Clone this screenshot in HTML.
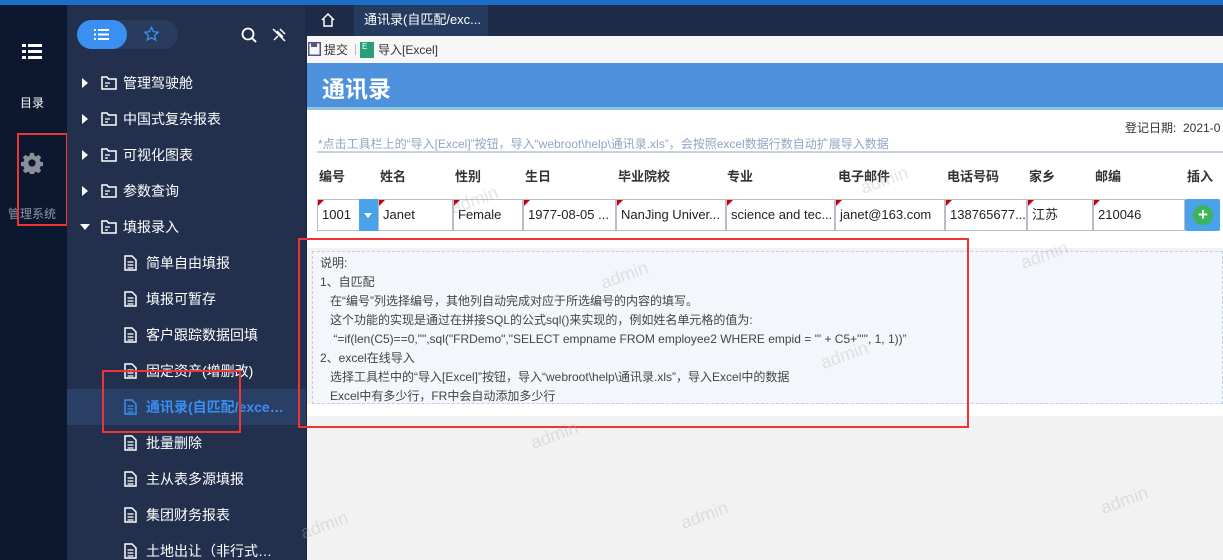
<!DOCTYPE html>
<html style="width:1223px;height:560px;overflow:hidden"><head><meta charset="utf-8"><style>
*{margin:0;padding:0;box-sizing:border-box}
body{width:1223px;height:560px;overflow:hidden;position:relative;background:#f2f2f2;font-family:"Liberation Sans","Noto Sans CJK SC",sans-serif;font-size:13px}
.abs{position:absolute}
.rail{left:0;top:5px;width:67px;height:555px;background:#0c1730}
.side{left:67px;top:5px;width:239px;height:555px;background:#22304e}
.item{position:absolute;left:0;width:239px;height:36px;color:#fff;font-size:14px;line-height:36px}
.item .t{position:absolute;left:56px}
.sub .t{left:79px}
.tri{position:absolute;left:15px;top:13px;width:0;height:0;border-left:6px solid #fff;border-top:5px solid transparent;border-bottom:5px solid transparent}
.trid{position:absolute;left:13px;top:15px;border-top:6px solid #fff;border-left:5px solid transparent;border-right:5px solid transparent}
.ic{position:absolute;left:34px;top:11px}
.sub .ic{left:57px;top:10px}
.hd{position:absolute;top:166px;font-size:13px;font-weight:bold;color:#333}
.cell{position:absolute;top:199px;height:32px;border:1px solid #b8bccb;background:#fff;line-height:30px;padding-left:4px;font-size:13px;color:#222;white-space:nowrap;overflow:hidden}
.cell:before{content:"";position:absolute;left:0;top:0;border-top:6px solid #c00;border-right:6px solid transparent}
.red{position:absolute;border:2px solid #ee3434}
.wm{position:absolute;color:rgba(180,180,180,.35);font-size:18px;transform:rotate(-20deg)}
</style></head><body>
<svg width="0" height="0" style="position:absolute"><defs>
<symbol id="fo" viewBox="0 0 16 14"><path d="M1 1h5l1.5 2H15v10H1z" fill="none" stroke="#fff" stroke-width="1.5"/><path d="M4 7h5M4 10h3" stroke="#fff" stroke-width="1.3"/></symbol>
<symbol id="dc" viewBox="0 0 13 16"><path d="M1 1h7l4 4v10H1z" fill="none" stroke="#fff" stroke-width="1.5"/><path d="M3.5 7h6M3.5 10h6M3.5 13h6" stroke="#fff" stroke-width="1.2"/></symbol>
<symbol id="dcb" viewBox="0 0 13 16"><path d="M1 1h7l4 4v10H1z" fill="none" stroke="#3b8ff0" stroke-width="1.5"/><path d="M3.5 7h6M3.5 10h6M3.5 13h6" stroke="#3b8ff0" stroke-width="1.2"/></symbol>
</defs></svg>
<div class="abs" style="left:0;top:0;width:1223px;height:5px;background:#1b6fc6"></div>
<div class="abs rail"></div>
<svg class="abs" style="left:22px;top:43px" width="20" height="18"><g fill="#fff"><rect x="0" y="1" width="4" height="3"/><rect x="6" y="1" width="14" height="3"/><rect x="0" y="7" width="4" height="3"/><rect x="6" y="7" width="14" height="3"/><rect x="0" y="13" width="4" height="3"/><rect x="6" y="13" width="14" height="3"/></g></svg>
<div class="abs" style="left:20px;top:94px;color:#fff;font-size:12px">目录</div>
<svg class="abs" style="left:21px;top:152px" width="22" height="22" viewBox="0 0 24 24"><path fill="#8a8f99" fill-rule="evenodd" d="M10 1h4l.6 3 2 .9 2.6-1.7 2.8 2.8-1.7 2.6.9 2 3 .6v4l-3 .6-.9 2 1.7 2.6-2.8 2.8-2.6-1.7-2 .9-.6 3h-4l-.6-3-2-.9-2.6 1.7-2.8-2.8 1.7-2.6-.9-2-3-.6v-4l3-.6.9-2-1.7-2.6 2.8-2.8 2.6 1.7 2-.9zM12 8a4 4 0 1 0 0 8 4 4 0 0 0 0-8z"/></svg>
<div class="abs" style="left:8px;top:205px;color:#8f96a3;font-size:12px">管理系统</div>
<div class="red" style="left:17px;top:133px;width:51px;height:93px"></div>

<div class="abs side">
 <div class="abs" style="left:10px;top:15px;width:101px;height:29px;border-radius:15px;background:#2a3c5e"></div>
 <div class="abs" style="left:10px;top:15px;width:50px;height:29px;border-radius:15px;background:#3b8ff0"></div>
 <svg class="abs" style="left:27px;top:23px" width="16" height="13"><g fill="#fff"><rect x="0" y="1" width="2" height="2"/><rect x="4" y="1" width="11" height="2"/><rect x="0" y="5.5" width="2" height="2"/><rect x="4" y="5.5" width="11" height="2"/><rect x="0" y="10" width="2" height="2"/><rect x="4" y="10" width="11" height="2"/></g></svg>
 <svg class="abs" style="left:76px;top:21px" width="17" height="16" viewBox="0 0 24 24"><path fill="none" stroke="#3b8ff0" stroke-width="2" d="M12 2l3 6.5 7 .8-5.2 4.8 1.5 7L12 17.5 5.7 21l1.5-7L2 9.3l7-.8z"/></svg>
 <svg class="abs" style="left:174px;top:22px" width="16" height="16"><circle cx="7" cy="7" r="5.5" fill="none" stroke="#fff" stroke-width="1.8"/><path d="M11 11l4 4" stroke="#fff" stroke-width="2"/></svg>
 <svg class="abs" style="left:204px;top:22px" width="16" height="16"><path d="M3 13l4-4M6 4l6 6M9 2l5 5M2 2l12 12" stroke="#fff" stroke-width="1.5" fill="none"/></svg>
 <div class="item" style="top:60px"><div class="tri"></div><svg class="ic" width="16" height="14"><use href="#fo"/></svg><span class="t">管理驾驶舱</span></div>
 <div class="item" style="top:96px"><div class="tri"></div><svg class="ic" width="16" height="14"><use href="#fo"/></svg><span class="t">中国式复杂报表</span></div>
 <div class="item" style="top:132px"><div class="tri"></div><svg class="ic" width="16" height="14"><use href="#fo"/></svg><span class="t">可视化图表</span></div>
 <div class="item" style="top:168px"><div class="tri"></div><svg class="ic" width="16" height="14"><use href="#fo"/></svg><span class="t">参数查询</span></div>
 <div class="item" style="top:204px"><div class="trid"></div><svg class="ic" width="16" height="14"><use href="#fo"/></svg><span class="t">填报录入</span></div>
 <div class="item sub" style="top:240px"><svg class="ic" width="13" height="16"><use href="#dc"/></svg><span class="t">简单自由填报</span></div>
 <div class="item sub" style="top:276px"><svg class="ic" width="13" height="16"><use href="#dc"/></svg><span class="t">填报可暂存</span></div>
 <div class="item sub" style="top:312px"><svg class="ic" width="13" height="16"><use href="#dc"/></svg><span class="t">客户跟踪数据回填</span></div>
 <div class="item sub" style="top:348px"><svg class="ic" width="13" height="16"><use href="#dc"/></svg><span class="t">固定资产(增删改)</span></div>
 <div class="item sub" style="top:384px;background:#2a3f66;color:#3b8ff0;font-weight:bold"><svg class="ic" width="13" height="16"><use href="#dcb"/></svg><span class="t">通讯录(自匹配/exce…</span></div>
 <div class="item sub" style="top:420px"><svg class="ic" width="13" height="16"><use href="#dc"/></svg><span class="t">批量删除</span></div>
 <div class="item sub" style="top:456px"><svg class="ic" width="13" height="16"><use href="#dc"/></svg><span class="t">主从表多源填报</span></div>
 <div class="item sub" style="top:492px"><svg class="ic" width="13" height="16"><use href="#dc"/></svg><span class="t">集团财务报表</span></div>
 <div class="item sub" style="top:528px"><svg class="ic" width="13" height="16"><use href="#dc"/></svg><span class="t">土地出让（非行式…</span></div>
</div>
<div class="red" style="left:102px;top:370px;width:139px;height:63px"></div>

<div class="abs" style="left:306px;top:5px;width:917px;height:31px;background:#1f2c48"></div>
<div class="abs" style="left:306px;top:5px;width:1px;height:555px;background:#1a2540"></div>
<svg class="abs" style="left:320px;top:12px" width="16" height="16"><path d="M2 8L8 2l6 6M4 7v7h8V7" fill="none" stroke="#fff" stroke-width="1.5"/></svg>
<div class="abs" style="left:354px;top:5px;width:134px;height:31px;background:#243a5e;color:#fff;font-size:13px;line-height:30px;padding-left:10px">通讯录(自匹配/exc...</div>

<div class="abs" style="left:307px;top:36px;width:916px;height:27px;background:#f7f7f7"></div>
<svg class="abs" style="left:308px;top:42px" width="13" height="14"><rect x="0.75" y="0.75" width="11.5" height="12.5" fill="none" stroke="#555588" stroke-width="1.5"/><rect x="3" y="1" width="6" height="4" fill="#555588"/></svg>
<div class="abs" style="left:324px;top:41px;font-size:12px;color:#333">提交</div>
<div class="abs" style="left:355px;top:44px;width:1px;height:11px;background:#bbb"></div>
<div class="abs" style="left:360px;top:42px;width:14px;height:16px;background:#27a07a;color:#fff;font-size:8px;padding-left:2px">E</div>
<div class="abs" style="left:378px;top:41px;font-size:12px;color:#333">导入[Excel]</div>

<div class="abs" style="left:307px;top:63px;width:916px;height:45px;background:#4e92de"></div>
<div class="abs" style="left:322px;top:70px;color:#fff;font-size:23px;font-weight:bold">通讯录</div>
<div class="abs" style="left:307px;top:107px;width:916px;height:3px;background:#8ec7dc"></div>
<div class="abs" style="left:307px;top:110px;width:916px;height:138px;background:#fff"></div>
<div class="abs" style="left:1125px;top:119px;font-size:12px;color:#333">登记日期: &nbsp;2021-0</div>
<div class="abs" style="left:318px;top:135px;font-size:12px;color:#93a3c4">*点击工具栏上的“导入[Excel]”按钮，导入“webroot\help\通讯录.xls”，会按照excel数据行数自动扩展导入数据</div>
<div class="abs" style="left:317px;top:151px;width:906px;height:2px;background:#c9d3e3"></div>

<div class="hd" style="left:319px">编号</div><div class="hd" style="left:380px">姓名</div><div class="hd" style="left:455px">性别</div><div class="hd" style="left:525px">生日</div><div class="hd" style="left:618px">毕业院校</div><div class="hd" style="left:727px">专业</div><div class="hd" style="left:838px">电子邮件</div><div class="hd" style="left:947px">电话号码</div><div class="hd" style="left:1029px">家乡</div><div class="hd" style="left:1095px">邮编</div><div class="hd" style="left:1187px">插入</div>

<div class="cell" style="left:317px;width:43px">1001</div>
<div class="abs" style="left:359px;top:199px;width:19px;height:32px;background:#4aa3ea"></div>
<div class="abs" style="left:364px;top:213px;border-top:5px solid #fff;border-left:4px solid transparent;border-right:4px solid transparent"></div>
<div class="cell" style="left:378px;width:75px">Janet</div>
<div class="cell" style="left:453px;width:70px">Female</div>
<div class="cell" style="left:523px;width:93px">1977-08-05 ...</div>
<div class="cell" style="left:616px;width:110px">NanJing Univer...</div>
<div class="cell" style="left:726px;width:109px">science and tec...</div>
<div class="cell" style="left:835px;width:110px">janet@163.com</div>
<div class="cell" style="left:945px;width:82px">138765677...</div>
<div class="cell" style="left:1027px;width:66px">江苏</div>
<div class="cell" style="left:1093px;width:92px">210046</div>
<div class="abs" style="left:1185px;top:199px;width:35px;height:32px;background:#4aa3ea;border-radius:2px"></div>
<div class="abs" style="left:1193px;top:205px;width:20px;height:20px;border-radius:50%;background:#3cb55a;color:#fff;font-weight:bold;font-size:17px;line-height:19px;text-align:center">+</div>

<div class="abs" style="left:312px;top:251px;width:911px;height:153px;background:#f3f6fa;border:1px dashed #c5cede;font-size:12px;color:#444;line-height:19px;padding:2px 0 0 7px;white-space:pre">说明:
1、自匹配
   在“编号”列选择编号，其他列自动完成对应于所选编号的内容的填写。
   这个功能的实现是通过在拼接SQL的公式sql()来实现的，例如姓名单元格的值为:
    “=if(len(C5)==0,"",sql("FRDemo","SELECT empname FROM employee2 WHERE empid = '" + C5+"'", 1, 1))”
2、excel在线导入
   选择工具栏中的“导入[Excel]”按钮，导入“webroot\help\通讯录.xls”，导入Excel中的数据
   Excel中有多少行，FR中会自动添加多少行</div>
<div class="abs" style="left:307px;top:404px;width:916px;height:12px;background:#fff"></div>
<div class="red" style="left:298px;top:238px;width:671px;height:190px"></div>

<div class="wm" style="left:450px;top:190px">admin</div>
<div class="wm" style="left:600px;top:265px">admin</div>
<div class="wm" style="left:860px;top:170px">admin</div>
<div class="wm" style="left:1020px;top:245px">admin</div>
<div class="wm" style="left:820px;top:345px">admin</div>
<div class="wm" style="left:530px;top:425px">admin</div>
<div class="wm" style="left:1100px;top:490px">admin</div>
<div class="wm" style="left:300px;top:515px">admin</div>
<div class="wm" style="left:680px;top:505px">admin</div>
</body></html>
